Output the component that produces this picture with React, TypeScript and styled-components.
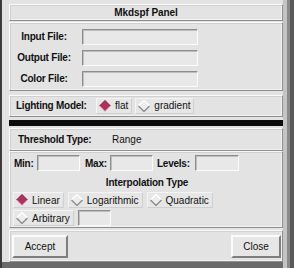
import * as React from 'react';
import styled, { createGlobalStyle } from 'styled-components';

const GlobalStyle = createGlobalStyle`
    html, body {
        margin: 0;
        padding: 0;
        background: #6a6a6a;
    }
    body {
        font-family: "Liberation Sans", Arial, sans-serif;
        font-size: 10px;
        color: #111;
    }
`;

const bg = '#e3e3e3';
const hi = '#fbfbfb';
const lo = '#8e8e8e';

const Window = styled.div`
    width: 294px;
    height: 268px;
    display: flex;
    overflow: hidden;
`;

const LeftFrame = styled.div`
    width: 2px;
    background: #3c3c3c;
`;

const RightFrame = styled.div`
    width: 11px;
    background: linear-gradient(to right, #c4c4c4 0 4px, #8a8a8a 4px 7px, #5a5a5a 7px);
`;

const Main = styled.div`
    width: 281px;
    height: 262px;
    background: ${bg};
    padding: 4px 0 0 7px;
    box-sizing: border-box;
    display: flex;
    flex-direction: column;
`;

const Raised = styled.div<{ $h: number; $mt?: number }>`
    height: ${(p) => p.$h}px;
    margin-top: ${(p) => p.$mt ?? 0}px;
    box-sizing: border-box;
    border: 1px solid;
    border-color: ${hi} ${lo} ${lo} ${hi};
    box-shadow: inset 1px 1px 0 #d0d0d0, inset -1px -1px 0 #f2f2f2;
`;

const TitleBar = styled(Raised)`
    display: flex;
    align-items: center;
    justify-content: center;
    font-weight: bold;
    letter-spacing: -0.1px;
`;

const FileGroup = styled(Raised)`
    display: grid;
    grid-template-columns: 66px 116px;
    grid-auto-rows: 16px;
    row-gap: 5px;
    column-gap: 5px;
    padding: 6px 0 0 1px;
    align-items: center;
`;

const FieldLabel = styled.span`
    font-weight: bold;
    text-align: center;
    letter-spacing: -0.2px;
`;

const Field = styled.div<{ $w?: number }>`
    width: ${(p) => (p.$w ? `${p.$w}px` : 'auto')};
    height: 16px;
    flex-shrink: 0;
    box-sizing: border-box;
    background: #e8e8e8;
    border: 1px solid;
    border-color: ${lo} ${hi} ${hi} ${lo};
    box-shadow: inset 1px 1px 0 #bdbdbd;
`;

const RowBox = styled(Raised)<{ $pl: number }>`
    display: flex;
    align-items: center;
    padding-left: ${(p) => p.$pl}px;
`;

const BoldLabel = styled.span<{ $w?: number; $ml?: number }>`
    font-weight: bold;
    letter-spacing: -0.25px;
    width: ${(p) => (p.$w ? `${p.$w}px` : 'auto')};
    margin-left: ${(p) => p.$ml ?? 0}px;
    margin-right: 3px;
    flex-shrink: 0;
`;

const BlackBar = styled.div`
    height: 6px;
    margin-top: 3px;
    background: #0c0c0c;
`;

const Radio = styled.span<{ $ml?: number }>`
    display: inline-flex;
    align-items: center;
    gap: 4px;
    height: 16px;
    margin-left: ${(p) => p.$ml ?? 0}px;
    padding: 0 3px 0 2px;
    box-sizing: border-box;
    border: 1px solid;
    border-color: #f4f4f4 #cfcfcf #cfcfcf #f4f4f4;
    background: #e6e6e6;
`;

const Diamond = ({ on }: { on?: boolean }) => (
    <svg width="12" height="12" viewBox="0 0 12 12">
        {on ? (
            <>
                <polygon points="6,0.5 11.5,6 6,11.5 0.5,6" fill="#b03060" />
                <polyline points="0.5,6 6,0.5 11.5,6" fill="none" stroke="#7a1a3c" strokeWidth="1" />
                <polyline points="0.5,6 6,11.5 11.5,6" fill="none" stroke="#f0c0d0" strokeWidth="1" />
            </>
        ) : (
            <>
                <polygon points="6,0.5 11.5,6 6,11.5 0.5,6" fill="#ececec" />
                <polyline points="0.5,6 6,0.5 11.5,6" fill="none" stroke="#ffffff" strokeWidth="1.4" />
                <polyline points="0.5,6 6,11.5 11.5,6" fill="none" stroke="#8c8c8c" strokeWidth="1.4" />
            </>
        )}
    </svg>
);

const LowerGroup = styled(Raised)`
    display: flex;
    flex-direction: column;
    padding: 3px 0 0 2px;
`;

const MinRow = styled.div`
    display: flex;
    align-items: center;
    height: 16px;
    padding-left: 2px;
`;

const CenterTitle = styled.div`
    text-align: center;
    font-weight: bold;
    letter-spacing: -0.2px;
    margin: 6px 0 4px 0;
    line-height: 11px;
`;

const RadioRow = styled.div`
    display: flex;
    align-items: center;
    gap: 4px;
    height: 16px;
    margin-bottom: 2px;
    padding-left: 1px;
`;

const ButtonBar = styled(Raised)`
    display: flex;
    align-items: center;
    justify-content: space-between;
    padding: 0 1px 0 2px;
`;

const Button = styled.div<{ $w: number }>`
    width: ${(p) => p.$w}px;
    height: 23px;
    box-sizing: border-box;
    display: flex;
    align-items: center;
    justify-content: center;
    border: 2px solid;
    border-color: ${hi} #7e7e7e #7e7e7e ${hi};
    background: #e6e6e6;
`;

export default function App() {
    return (
        <>
            <GlobalStyle />
            <Window>
                <LeftFrame />
                <Main>
                    <TitleBar $h={17}>Mkdspf Panel</TitleBar>
                    <FileGroup $h={69} $mt={1}>
                        <FieldLabel>Input File:</FieldLabel>
                        <Field />
                        <FieldLabel>Output File:</FieldLabel>
                        <Field />
                        <FieldLabel>Color File:</FieldLabel>
                        <Field />
                    </FileGroup>
                    <RowBox $h={23} $mt={4} $pl={6}>
                        <BoldLabel $w={77}>Lighting Model:</BoldLabel>
                        <Radio>
                            <Diamond on />
                            flat
                        </Radio>
                        <Radio $ml={3}>
                            <Diamond />
                            gradient
                        </Radio>
                    </RowBox>
                    <BlackBar />
                    <RowBox $h={23} $mt={2} $pl={8}>
                        <BoldLabel $w={91}>Threshold Type:</BoldLabel>
                        <span>Range</span>
                    </RowBox>
                    <LowerGroup $h={77}>
                        <MinRow>
                            <BoldLabel $w={20}>Min:</BoldLabel>
                            <Field $w={43} />
                            <BoldLabel $w={22} $ml={5}>Max:</BoldLabel>
                            <Field $w={43} />
                            <BoldLabel $w={34} $ml={4}>Levels:</BoldLabel>
                            <Field $w={44} style={{ marginLeft: 1 }} />
                        </MinRow>
                        <CenterTitle>Interpolation Type</CenterTitle>
                        <RadioRow>
                            <Radio>
                                <Diamond on />
                                Linear
                            </Radio>
                            <Radio>
                                <Diamond />
                                Logarithmic
                            </Radio>
                            <Radio>
                                <Diamond />
                                Quadratic
                            </Radio>
                        </RadioRow>
                        <RadioRow>
                            <Radio>
                                <Diamond />
                                Arbitrary
                            </Radio>
                            <Field $w={33} />
                        </RadioRow>
                    </LowerGroup>
                    <ButtonBar $h={32} $mt={2}>
                        <Button $w={56}>Accept</Button>
                        <Button $w={50}>Close</Button>
                    </ButtonBar>
                </Main>
                <RightFrame />
            </Window>
        </>
    );
}
